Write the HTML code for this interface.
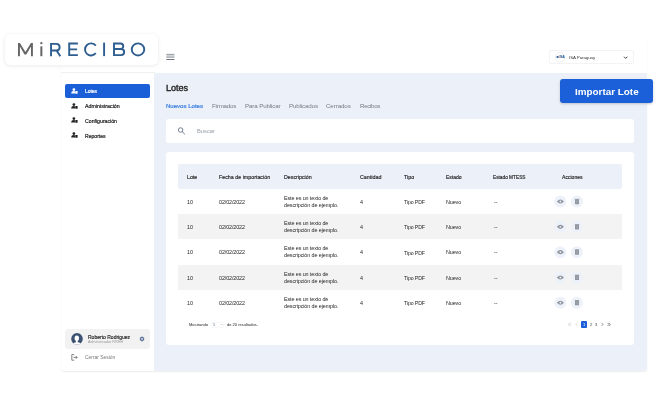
<!DOCTYPE html>
<html><head><meta charset="utf-8">
<style>
*{margin:0;padding:0;box-sizing:border-box}
html,body{width:657px;height:406px;overflow:hidden;background:#fff;font-family:"Liberation Sans",sans-serif;position:relative}
.a{position:absolute}
.t{position:absolute;white-space:nowrap;line-height:10px;height:10px;will-change:transform}
#main{left:60.5px;top:42px;width:586px;height:329px;background:#fff;border-radius:3px;box-shadow:0 1px 1.6px rgba(0,0,0,.08)}
#content{left:154px;top:72.5px;width:492.5px;height:298.5px;background:#ecf0f9;border-radius:0 0 3px 0}
#hdrline{left:60.5px;top:72px;width:94px;height:1px;background:#f0f0f0}
#logo{left:5px;top:34px;width:153px;height:31px;background:#fff;border-radius:5px;box-shadow:0 1px 4px rgba(0,0,0,.08),0 0 1.5px rgba(0,0,0,.05)}
.ham{left:166.4px;width:8px;height:1.1px;background:#858585}
#dd{left:549.3px;top:50.3px;width:85px;height:14px;border:1px solid #f3f3f3;border-radius:2px;background:#fff}
#imp{left:560px;top:78.8px;width:93px;height:24.4px;background:#1b60d8;border-radius:3px;box-shadow:0 1px 2.5px rgba(0,0,0,.2)}
.tab{font-size:6px;color:#8a8f98}
#search{left:166px;top:119px;width:468.4px;height:23.8px;background:#fff;border-radius:3px}
#card{left:166px;top:152.3px;width:468.4px;height:192.4px;background:#fff;border-radius:3px}
#thead{left:178px;top:164.3px;width:444px;height:24.5px;background:#ebf0f9;border-radius:2px}
.row{left:178px;width:444px;height:25.3px}
.gray{background:#f3f3f3}
.th{font-size:5.3px;font-weight:400;color:#222;-webkit-text-stroke:0.15px #222}
.td{font-size:5.4px;color:#262626;letter-spacing:-0.11px}
.desc{position:absolute;will-change:transform;white-space:nowrap;font-size:5.4px;line-height:6.7px;color:#262626;letter-spacing:-0.1px}
.circ{width:12px;height:12px;border-radius:50%;background:#edf1f9}
.menu{font-size:5.2px;font-weight:400;color:#222}
</style></head>
<body>
<div id="main" class="a"></div>
<div id="hdrline" class="a"></div>
<div id="content" class="a"></div>

<!-- logo -->
<div id="logo" class="a"></div>
<svg class="a" style="left:0;top:0" width="160" height="70" viewBox="0 0 160 70">
  <path d="M18 56.2 V42.9 H19.9 L25.4 52 L30.9 42.9 H32.9 V56.2 H31 V46.6 L26.3 54.4 H24.5 L19.9 46.6 V56.2 Z" fill="#656565"/>
  <rect x="40.35" y="46.4" width="2" height="9.8" fill="#656565"/>
  <circle cx="41.35" cy="43.15" r="1.15" fill="#656565"/>
  <g stroke="#2e5d8f" stroke-width="1.9" fill="none">
    <path d="M51.05 56.2 V43.85 H56.5 A3.33 3.33 0 0 1 56.5 50.5 H51.05"/>
    <path d="M56.6 50.6 L60.3 56.2"/>
    <path d="M77.9 43.55 H69.2 V55.15 H77.9 M69.2 49.4 H77.1"/>
    <path d="M95.8 45.6 A6.05 6.05 0 1 0 95.8 53.2"/>
    <path d="M104.1 42.6 V56.1"/>
    <path d="M114 43.55 H120.5 A2.75 2.75 0 0 1 120.5 49.05 H114 M114 49.05 H121.1 A3.05 3.05 0 0 1 121.1 55.15 H114 V42.6"/>
    <ellipse cx="138" cy="49.4" rx="6.25" ry="6.05"/>
  </g>
</svg>

<!-- hamburger -->
<svg class="a" style="left:0;top:0" width="200" height="70"><rect x="166.3" y="54.4" width="8.1" height="2.8" fill="#d3d5d9"/><path d="M166.3 54.4 H174.4 M166.3 57.2 H174.4" stroke="#9a9ea5" stroke-width="1"/><path d="M166.3 59.5 H174.4" stroke="#6f7480" stroke-width="1.05"/></svg>

<!-- dropdown -->
<div id="dd" class="a"></div>
<div class="a" style="left:554.8px;top:52.2px;width:10.6px;height:10.6px;border-radius:50%;border:0.5px solid #f0f0f0"></div>
<svg class="a" style="left:554px;top:54px" width="12" height="6" viewBox="0 0 12 6"><path d="M1.8 3 L4.2 1.8 V4.2Z" fill="#2a5a90"/><rect x="3.4" y="2.6" width="1.6" height="0.8" fill="#2a5a90"/><text x="5.2" y="4.3" font-family="Liberation Sans" font-weight="700" font-size="3.4" fill="#24508a" textLength="5.6" lengthAdjust="spacingAndGlyphs">ISA</text></svg>
<div class="t" style="left:569px;top:52.6px;font-size:4.4px;letter-spacing:-0.06px;color:#3a3a3a">ISA Paraguay</div>
<svg class="a" style="left:622px;top:55px" width="8" height="6"><path d="M2 1.7 L3.7 3.4 L5.4 1.7" stroke="#3a3a3a" stroke-width="0.95" fill="none"/></svg>

<!-- import button -->
<div id="imp" class="a"></div>
<div class="t" style="left:574.6px;top:85.8px;font-size:9.9px;line-height:12px;height:12px;font-weight:700;color:#fff">Importar Lote</div>

<!-- title and tabs -->
<div class="t" style="left:166px;top:82.5px;font-size:9.1px;line-height:11px;height:11px;color:#1a1a1a;font-weight:400;-webkit-text-stroke:0.35px #1a1a1a;letter-spacing:-0.05px">Lotes</div>
<div class="t tab" style="left:166px;top:100.6px;color:#3d7fdf;font-weight:400;font-size:6.05px;-webkit-text-stroke:0.22px #3d7fdf">Nuevos Lotes</div>
<div class="t tab" style="left:211.6px;top:100.6px;color:#767b84;font-weight:400;font-size:6.2px;letter-spacing:-0.193px">Firmados</div>
<div class="t tab" style="left:245px;top:100.6px;color:#767b84;font-weight:400;font-size:6.2px;letter-spacing:-0.125px">Para Publicar</div>
<div class="t tab" style="left:288.6px;top:100.6px;color:#767b84;font-weight:400;font-size:6.2px;letter-spacing:-0.133px">Publicados</div>
<div class="t tab" style="left:326.3px;top:100.6px;color:#767b84;font-weight:400;font-size:6.2px;letter-spacing:-0.100px">Cerrados</div>
<div class="t tab" style="left:359.9px;top:100.6px;color:#767b84;font-weight:400;font-size:6.2px;letter-spacing:-0.329px">Recibos</div>

<!-- search -->
<div id="search" class="a"></div>
<svg class="a" style="left:176px;top:126px" width="11" height="10"><circle cx="4.6" cy="4" r="2.25" stroke="#5f6d85" stroke-width="0.85" fill="none"/><path d="M6.3 5.7 L8.6 8" stroke="#5f6d85" stroke-width="0.9" stroke-linecap="round"/></svg>
<div class="t" style="left:196.7px;top:126.3px;font-size:5.75px;color:#949aa6">Buscar</div>

<!-- table card -->
<div id="card" class="a"></div>
<div id="thead" class="a"></div>
<div class="a row gray" style="top:214.1px"></div>
<div class="a row gray" style="top:264.7px"></div>

<!--GEN-->
<div class="t th" style="left:187.4px;top:171.70px;font-size:5.3px">Lote</div>
<div class="t th" style="left:218.5px;top:171.70px;font-size:5.32px">Fecha de importación</div>
<div class="t th" style="left:283.8px;top:171.70px;font-size:5.3px">Descripción</div>
<div class="t th" style="left:359.8px;top:171.70px;font-size:5.35px">Cantidad</div>
<div class="t th" style="left:403.5px;top:171.70px;font-size:5.3px">Tipo</div>
<div class="t th" style="left:445.5px;top:171.70px;font-size:5.04px">Estado</div>
<div class="t th" style="left:493.4px;top:172.70px;font-size:4.75px">Estado MTESS</div>
<div class="t th" style="left:561.7px;top:171.70px;font-size:5.1px">Acciones</div>
<div class="t td" style="left:187.4px;top:196.65px">10</div>
<div class="t td" style="left:218.5px;top:196.65px">02/02/2022</div>
<div class="desc" style="left:283.8px;top:194.85px">Este es un texto de<br>descripción de ejemplo.</div>
<div class="t td" style="left:360.2px;top:196.65px">4</div>
<div class="t td" style="left:403.5px;top:196.90px;font-size:5.2px">Tipo PDF</div>
<div class="t td" style="left:445.5px;top:196.65px">Nuevo</div>
<div class="t td" style="left:494px;top:196.65px">--</div>
<div class="t td" style="left:187.4px;top:221.95px">10</div>
<div class="t td" style="left:218.5px;top:221.95px">02/02/2022</div>
<div class="desc" style="left:283.8px;top:220.15px">Este es un texto de<br>descripción de ejemplo.</div>
<div class="t td" style="left:360.2px;top:221.95px">4</div>
<div class="t td" style="left:403.5px;top:222.20px;font-size:5.2px">Tipo PDF</div>
<div class="t td" style="left:445.5px;top:221.95px">Nuevo</div>
<div class="t td" style="left:494px;top:221.95px">--</div>
<div class="t td" style="left:187.4px;top:247.25px">10</div>
<div class="t td" style="left:218.5px;top:247.25px">02/02/2022</div>
<div class="desc" style="left:283.8px;top:245.45px">Este es un texto de<br>descripción de ejemplo.</div>
<div class="t td" style="left:360.2px;top:247.25px">4</div>
<div class="t td" style="left:403.5px;top:247.50px;font-size:5.2px">Tipo PDF</div>
<div class="t td" style="left:445.5px;top:247.25px">Nuevo</div>
<div class="t td" style="left:494px;top:247.25px">--</div>
<div class="t td" style="left:187.4px;top:272.55px">10</div>
<div class="t td" style="left:218.5px;top:272.55px">02/02/2022</div>
<div class="desc" style="left:283.8px;top:270.75px">Este es un texto de<br>descripción de ejemplo.</div>
<div class="t td" style="left:360.2px;top:272.55px">4</div>
<div class="t td" style="left:403.5px;top:272.80px;font-size:5.2px">Tipo PDF</div>
<div class="t td" style="left:445.5px;top:272.55px">Nuevo</div>
<div class="t td" style="left:494px;top:272.55px">--</div>
<div class="t td" style="left:187.4px;top:297.85px">10</div>
<div class="t td" style="left:218.5px;top:297.85px">02/02/2022</div>
<div class="desc" style="left:283.8px;top:296.05px">Este es un texto de<br>descripción de ejemplo.</div>
<div class="t td" style="left:360.2px;top:297.85px">4</div>
<div class="t td" style="left:403.5px;top:298.10px;font-size:5.2px">Tipo PDF</div>
<div class="t td" style="left:445.5px;top:297.85px">Nuevo</div>
<div class="t td" style="left:494px;top:297.85px">--</div>
<svg class="a" style="left:0;top:0" width="657" height="406" viewBox="0 0 657 406"><circle cx="560.3" cy="201.55" r="6" fill="#edf1f9"/><circle cx="576.9" cy="201.55" r="6" fill="#edf1f9"/><path d="M556.9 201.55 Q560.4 197.45 563.9 201.55 Q560.4 205.65 556.9 201.55Z" fill="#8e939b"/><circle cx="560.4" cy="201.55" r="0.95" fill="#e9edf5"/><rect x="575" y="199.15" width="4" height="5" rx="0.4" fill="#90959d"/><rect x="574.7" y="198.85" width="4.6" height="0.6" fill="#90959d"/><path d="M576.3 200.35 V203.15 M577.7 200.35 V203.15" stroke="#b4b8bf" stroke-width="0.45"/><circle cx="560.3" cy="226.85" r="6" fill="#edf1f9"/><circle cx="576.9" cy="226.85" r="6" fill="#edf1f9"/><path d="M556.9 226.85 Q560.4 222.75 563.9 226.85 Q560.4 230.95 556.9 226.85Z" fill="#8e939b"/><circle cx="560.4" cy="226.85" r="0.95" fill="#e9edf5"/><rect x="575" y="224.45" width="4" height="5" rx="0.4" fill="#90959d"/><rect x="574.7" y="224.15" width="4.6" height="0.6" fill="#90959d"/><path d="M576.3 225.65 V228.45 M577.7 225.65 V228.45" stroke="#b4b8bf" stroke-width="0.45"/><circle cx="560.3" cy="252.15" r="6" fill="#edf1f9"/><circle cx="576.9" cy="252.15" r="6" fill="#edf1f9"/><path d="M556.9 252.15 Q560.4 248.05 563.9 252.15 Q560.4 256.25 556.9 252.15Z" fill="#8e939b"/><circle cx="560.4" cy="252.15" r="0.95" fill="#e9edf5"/><rect x="575" y="249.75" width="4" height="5" rx="0.4" fill="#90959d"/><rect x="574.7" y="249.45" width="4.6" height="0.6" fill="#90959d"/><path d="M576.3 250.95 V253.75 M577.7 250.95 V253.75" stroke="#b4b8bf" stroke-width="0.45"/><circle cx="560.3" cy="277.45" r="6" fill="#edf1f9"/><circle cx="576.9" cy="277.45" r="6" fill="#edf1f9"/><path d="M556.9 277.45 Q560.4 273.35 563.9 277.45 Q560.4 281.55 556.9 277.45Z" fill="#8e939b"/><circle cx="560.4" cy="277.45" r="0.95" fill="#e9edf5"/><rect x="575" y="275.05" width="4" height="5" rx="0.4" fill="#90959d"/><rect x="574.7" y="274.75" width="4.6" height="0.6" fill="#90959d"/><path d="M576.3 276.25 V279.05 M577.7 276.25 V279.05" stroke="#b4b8bf" stroke-width="0.45"/><circle cx="560.3" cy="302.75" r="6" fill="#edf1f9"/><circle cx="576.9" cy="302.75" r="6" fill="#edf1f9"/><path d="M556.9 302.75 Q560.4 298.65 563.9 302.75 Q560.4 306.85 556.9 302.75Z" fill="#8e939b"/><circle cx="560.4" cy="302.75" r="0.95" fill="#e9edf5"/><rect x="575" y="300.35" width="4" height="5" rx="0.4" fill="#90959d"/><rect x="574.7" y="300.05" width="4.6" height="0.6" fill="#90959d"/><path d="M576.3 301.55 V304.35 M577.7 301.55 V304.35" stroke="#b4b8bf" stroke-width="0.45"/></svg>
<div class="t td" style="left:188.8px;top:319.7px;font-size:4.06px;letter-spacing:0">Mostrando</div>
<div class="a" style="left:211.3px;top:321.7px;width:13px;height:6.2px;border:0.5px solid #f6f7f8;border-radius:1px"></div>
<div class="t td" style="left:213px;top:319.7px;font-size:4.06px;color:#6a7a95">5</div>
<svg class="a" style="left:220px;top:323px" width="3" height="3" viewBox="0 0 3 3"><path d="M0.9 1.1 L1.5 1.8 L2.1 1.1" stroke="#999" stroke-width="0.6" fill="none"/></svg>
<div class="t td" style="left:226.6px;top:319.7px;font-size:4.03px;letter-spacing:0">de 20 resultados.</div>
<div class="a" style="left:580.8px;top:321.2px;width:6.3px;height:6.5px;background:#1b5fd8;border-radius:1px"></div>
<div class="t" style="left:582.7px;top:319.7px;font-size:4.2px;color:#fff">1</div>
<div class="t" style="left:589.6px;top:319.7px;font-size:4.2px;color:#444">2</div>
<div class="t" style="left:594.9px;top:319.7px;font-size:4.2px;color:#444">3</div>
<svg class="a" style="left:566px;top:321px" width="48" height="7" viewBox="0 0 48 7"><g fill="none" stroke-width="0.6"><path d="M3.6 1.8 L2.2 3.4 L3.6 5 M5 1.8 L3.6 3.4 L5 5" stroke="#c8c8c8"/><path d="M11.3 1.8 L9.9 3.4 L11.3 5" stroke="#c8c8c8"/><path d="M35.6 1.8 L37 3.4 L35.6 5" stroke="#555"/><path d="M41.6 1.8 L43 3.4 L41.6 5 M43 1.8 L44.4 3.4 L43 5" stroke="#555"/></g></svg>
<div class="a" style="left:64.8px;top:83.7px;width:85.2px;height:14.4px;background:#1b5fd8;border-radius:2px"></div>
<div class="a" style="left:71px;top:88.20px;width:7px;height:6px;line-height:0"><svg width="7" height="6" viewBox="0 0 7 6"><circle cx="2.9" cy="1.6" r="1.35" fill="#fff"/><path d="M0.1 5.5 Q0.3 3.1 2.6 3.1 Q3.9 3.1 4.1 3.6 V5.5Z" fill="#fff"/><rect x="4.3" y="3.1" width="2.3" height="2.6" rx="0.3" fill="#fff"/></svg></div>
<div class="t menu" style="left:84.8px;top:87.00px;color:#fff;font-size:4.95px;-webkit-text-stroke:0.2px #fff">Lotes</div>
<div class="a" style="left:71px;top:102.60px;width:7px;height:6px;line-height:0"><svg width="7" height="6" viewBox="0 0 7 6"><circle cx="2.9" cy="1.6" r="1.35" fill="#222"/><path d="M0.1 5.5 Q0.3 3.1 2.6 3.1 Q3.9 3.1 4.1 3.6 V5.5Z" fill="#222"/><rect x="4.3" y="3.1" width="2.3" height="2.6" rx="0.3" fill="#222"/></svg></div>
<div class="t menu" style="left:84.8px;top:101.40px;color:#222;font-size:5.3px;-webkit-text-stroke:0.2px #222">Administración</div>
<div class="a" style="left:71px;top:117.30px;width:7px;height:6px;line-height:0"><svg width="7" height="6" viewBox="0 0 7 6"><circle cx="2.9" cy="1.6" r="1.35" fill="#222"/><path d="M0.1 5.5 Q0.3 3.1 2.6 3.1 Q3.9 3.1 4.1 3.6 V5.5Z" fill="#222"/><rect x="4.3" y="3.1" width="2.3" height="2.6" rx="0.3" fill="#222"/></svg></div>
<div class="t menu" style="left:84.8px;top:116.10px;color:#222;font-size:5.2px;-webkit-text-stroke:0.2px #222">Configuración</div>
<div class="a" style="left:71px;top:132.20px;width:7px;height:6px;line-height:0"><svg width="7" height="6" viewBox="0 0 7 6"><circle cx="2.9" cy="1.6" r="1.35" fill="#222"/><path d="M0.1 5.5 Q0.3 3.1 2.6 3.1 Q3.9 3.1 4.1 3.6 V5.5Z" fill="#222"/><rect x="4.3" y="3.1" width="2.3" height="2.6" rx="0.3" fill="#222"/></svg></div>
<div class="t menu" style="left:84.8px;top:131.00px;color:#222;font-size:5.1px;-webkit-text-stroke:0.2px #222">Reportes</div>
<div class="a" style="left:64.6px;top:329px;width:85.4px;height:19.6px;background:#f2f2f3;border-radius:3px"></div>
<svg class="a" style="left:70.5px;top:333px" width="12" height="12" viewBox="0 0 12 12"><defs><clipPath id="avc"><circle cx="6" cy="5.8" r="5.8"/></clipPath></defs><circle cx="6" cy="5.8" r="5.8" fill="#3d5272"/><g clip-path="url(#avc)" fill="#fff"><ellipse cx="5.8" cy="5.3" rx="2.2" ry="2.7"/><rect x="4.9" y="7" width="1.8" height="3"/><ellipse cx="6" cy="12.3" rx="4.8" ry="3"/></g></svg>
<div class="t" style="left:87.6px;top:331.5px;font-size:5.02px;color:#222;-webkit-text-stroke:0.15px #222">Roberto Rodriguez</div>
<div class="t" style="left:87.6px;top:336.6px;font-size:3.78px;color:#9a9a9a">Administrador RRHH</div>
<svg class="a" style="left:138.6px;top:335.8px" width="6" height="6" viewBox="0 0 6 6"><path d="M2.31 1.08 L2.49 0.40 L3.51 0.40 L3.69 1.08 L4.24 1.39 L4.91 1.21 L5.42 2.09 L4.92 2.58 L4.92 3.22 L5.42 3.71 L4.91 4.59 L4.24 4.41 L3.69 4.72 L3.51 5.40 L2.49 5.40 L2.31 4.72 L1.76 4.41 L1.09 4.59 L0.58 3.71 L1.08 3.22 L1.08 2.58 L0.58 2.09 L1.09 1.21 L1.76 1.39Z M3.85 2.9 A0.85 0.85 0 1 0 2.15 2.9 A0.85 0.85 0 1 0 3.85 2.9Z" fill="#5a6f94" fill-rule="evenodd"/></svg>
<svg class="a" style="left:70.6px;top:354px" width="7" height="7" viewBox="0 0 7 7"><path d="M3.2 0.6 H0.8 V6.2 H3.2" stroke="#555" stroke-width="0.7" fill="none"/><path d="M2.4 3.4 H6.2 M4.8 2 L6.2 3.4 L4.8 4.8" stroke="#555" stroke-width="0.7" fill="none"/></svg>
<div class="t" style="left:84.7px;top:353px;font-size:4.91px;color:#777">Cerrar Sesión</div>
<!--/GEN-->

</body></html>
